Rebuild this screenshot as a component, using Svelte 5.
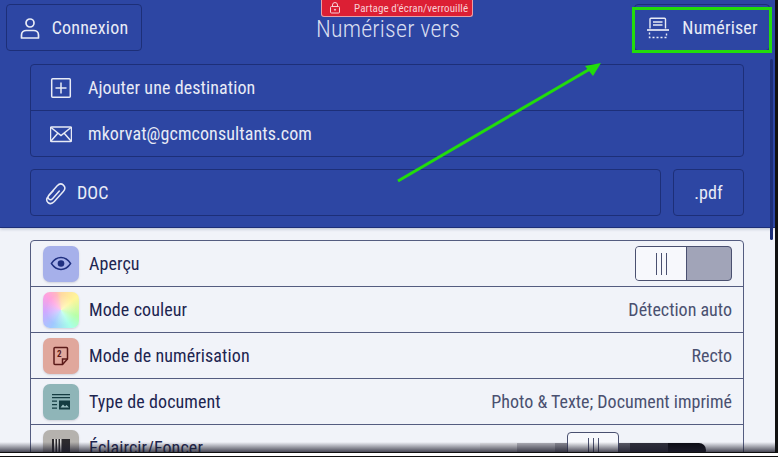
<script>
  const rows = [
    { label: 'Mode couleur', value: 'Détection auto', icon: 'color' },
    { label: 'Mode de numérisation', value: 'Recto', icon: 'sides' },
    { label: 'Type de document', value: 'Photo & Texte; Document imprimé', icon: 'doc' }
  ];
</script>

<div class="screen">
  <div class="app">
    <header class="top">
      <div class="bar">
        <button class="btn login">
          <svg width="20" height="22" viewBox="0 0 20 22" fill="none" stroke="currentColor" stroke-width="1.700">
            <circle cx="10" cy="6" r="4" />
            <path d="M1.500 21v-3c0-2.800 2.200-4.500 4.800-4.500h7.400c2.600 0 4.800 1.700 4.800 4.500v3z" stroke-linejoin="round" />
          </svg>
          <span>Connexion</span>
        </button>
        <h1>Numériser vers</h1>
        <button class="btn scan">
          <svg width="24" height="24" viewBox="0 0 24 24" fill="none" stroke="currentColor" stroke-width="1.400">
            <path d="M4 12.500V3.200c0-.6.400-1 1-1h13.500c.6 0 1 .4 1 1v9.300" />
            <path d="M7 6h9.500M7 9h9.500" />
            <path d="M1 14h22" stroke-width="1.700" />
            <path d="M3.500 16.500v5h17v-5" stroke-dasharray="2 2" />
          </svg>
          <span>Numériser</span>
        </button>
      </div>

      <div class="dest">
        <div class="dest-row">
          <svg width="22" height="22" viewBox="0 0 22 22" fill="none" stroke="currentColor" stroke-width="1.500">
            <rect x="1.700" y="1.700" width="18.600" height="18.600" rx="1" />
            <path d="M11 5.500v11M5.500 11h11" />
          </svg>
          <span>Ajouter une destination</span>
        </div>
        <div class="dest-row">
          <svg width="22" height="22" viewBox="0 0 22 22" fill="none" stroke="currentColor" stroke-width="1.500">
            <rect x="0.500" y="4" width="21" height="14.500" rx="1" />
            <path d="M1 4.500l10 8 10-8M1 18l7-8M21 18l-7-8" />
          </svg>
          <span>mkorvat@gcmconsultants.com</span>
        </div>
      </div>

      <div class="file">
        <div class="name">
          <svg width="22" height="24" viewBox="0 0 22 24" fill="none" stroke="currentColor" stroke-width="1.500" stroke-linecap="round">
            <path d="M8.500 9.500l-5 5.500c-2.300 2.600-2.200 5-.4 6.600 1.800 1.600 4 1.300 6.200-1l9-10c1.900-2.200 1.900-4.800.1-6.500-1.800-1.600-4.300-1.400-6.200.6l-8.200 9.300c-1.200 1.500-1.200 3-.1 4 1.100 1 2.500.8 3.800-.6l6.600-7.400" />
          </svg>
          <span>DOC</span>
        </div>
        <div class="ext">.pdf</div>
      </div>
    </header>

    <main class="settings">
      <div class="list">
        <div class="row">
          <div class="ico" style="background:#a6b0ea">
            <svg width="22" height="15" viewBox="0 0 24 16" fill="none" stroke="#1f2f80" stroke-width="1.500">
              <path d="M1.500 8C4.500 3.500 8 1.500 12 1.500S19.500 3.500 22.500 8c-3 4.500-6.500 6.500-10.500 6.500S4.500 12.500 1.500 8z" />
              <circle cx="12" cy="8" r="3.600" fill="#1f2f80" stroke="none" />
            </svg>
          </div>
          <span class="label">Aperçu</span>
          <div class="toggle">
            <div class="knob"><i></i><i></i><i></i></div>
          </div>
        </div>

        {#each rows as r}
          <div class="row">
            {#if r.icon === 'color'}
              <div class="ico wheel"></div>
            {:else if r.icon === 'sides'}
              <div class="ico" style="background:#e0a79c">
                <svg width="18" height="20" viewBox="0 0 18 20" fill="none" stroke="#5b1a18" stroke-width="1.500">
                  <path d="M2 2.500c0-.6.400-1 1-1h11.500c.6 0 1 .4 1 1V13l-5 5.500H3c-.6 0-1-.4-1-1z" />
                  <path d="M15.500 13h-5v5.500" />
                  <text x="5" y="10.500" font-size="9" font-weight="700" fill="#5b1a18" stroke="none" font-family="Roboto">2</text>
                </svg>
              </div>
            {:else}
              <div class="ico" style="background:#8fb5b8">
                <svg width="20" height="18" viewBox="0 0 20 18" fill="#143c42">
                  <path d="M1 1h18v1.300H1zM1 4h18v1.300H1zM1 7.500h5v1.300H1zM1 11h5v1.300H1zM1 14.500h5v1.300H1z" />
                  <rect x="8" y="7.500" width="11" height="9" />
                  <path d="M9.500 14.500l2.500-3 2 2 1.500-1.500 2.500 2.500z" fill="#9cc0c3" />
                </svg>
              </div>
            {/if}
            <span class="label">{r.label}</span>
            <span class="value">{r.value}</span>
          </div>
        {/each}

        <div class="row">
          <div class="ico" style="background:#b5b2ae">
            <svg width="18" height="18" viewBox="0 0 18 18">
              <rect x="0" y="0" width="18" height="18" fill="#2c2a2e" />
              <path d="M2 0h1.500v18H2zM5 0h1.500v18H5zM8 0h1.500v18H8z" fill="#d8d6d4" />
            </svg>
          </div>
          <span class="label">Éclaircir/Foncer</span>
          <div class="slider">
            <div class="track"></div>
            <div class="knob thumb"><i></i><i></i><i></i></div>
          </div>
        </div>
      </div>
    </main>

    <div class="scroll"></div>
    <div class="fade"></div>

    <div class="banner">
      <svg width="12" height="12" viewBox="0 0 12 12" fill="none" stroke="currentColor" stroke-width="1">
        <rect x="1.500" y="4.500" width="9" height="6.500" rx="1" />
        <path d="M3.500 4.500V3a2.500 2.500 0 015 0v1.500" />
        <circle cx="6" cy="7.700" r=".6" fill="currentColor" />
      </svg>
      <span>Partage d'écran/verrouillé</span>
    </div>

    <div class="highlight"></div>
    <svg class="arrow" width="783" height="461" viewBox="0 0 783 461">
      <line x1="398" y1="181" x2="590" y2="69" stroke="#22dc0c" stroke-width="3" />
      <polygon points="601,63 585,66 593,76" fill="#22dc0c" />
    </svg>
  </div>
  <div class="edge-b"></div>
</div>

<style>
  :global(body) { margin: 0; background: #fff; }
  .screen {
    width: 783px;
    height: 461px;
    overflow: hidden;
    font-family: Roboto, "Liberation Sans", sans-serif;
    font-stretch: 75%;
    letter-spacing: .1px;
    background: #fff;
  }
  .app {
    position: relative;
    width: 775px;
    height: 452px;
    overflow: hidden;
    background: #f1f3f9;
    border-right: 3px solid #111;
    border-bottom: 1px solid #111;
  }
  .edge-b { height: 1px; margin-top: 3px; width: 778px; background: #111; }

  .top {
    background: #2d46a3;
    color: #e8ebf6;
    height: 228px;
    padding: 4px 5px 0 6px;
    box-sizing: border-box;
    border-bottom: 1px solid #1d2f78;
    box-shadow: 0 1px 3px rgba(20, 30, 80, .25);
  }
  .bar {
    display: flex;
    align-items: center;
    justify-content: space-between;
    height: 47px;
  }
  .btn {
    display: flex;
    align-items: center;
    justify-content: center;
    gap: 12px;
    width: 136px;
    height: 47px;
    box-sizing: border-box;
    background: transparent;
    color: inherit;
    border: 1px solid #1d2f78;
    border-radius: 4px;
    font: inherit;
    font-size: 18px;
    letter-spacing: .2px;
    padding: 0;
  }
  h1 {
    margin: 2px 0 0;
    font-weight: 300;
    font-size: 24px;
    letter-spacing: .2px;
    color: #d8ddf0;
  }
  .dest {
    margin: 13px 26px 0 24px;
    border: 1px solid #1d2f78;
    border-radius: 4px;
  }
  .dest-row {
    display: flex;
    align-items: center;
    gap: 16px;
    height: 45px;
    padding-left: 19px;
    font-size: 18px;
  }
  .dest-row + .dest-row { border-top: 1px solid #1d2f78; }
  .file {
    display: flex;
    gap: 12px;
    margin: 12px 26px 0 24px;
    height: 47px;
    font-size: 18px;
  }
  .name, .ext {
    display: flex;
    align-items: center;
    box-sizing: border-box;
    border: 1px solid #1d2f78;
    border-radius: 4px;
  }
  .name { flex: 1; gap: 10px; padding-left: 14px; }
  .ext { width: 71px; justify-content: center; }

  .settings { padding: 12px 31px 0 30px; }
  .list {
    border: 1px solid #545c80;
    border-radius: 4px 4px 0 0;
    color: #1d2550;
  }
  .row {
    display: flex;
    align-items: center;
    height: 45px;
    padding: 0 11px 0 12px;
    font-size: 18px;
  }
  .row + .row { border-top: 1px solid #545c80; }
  .ico {
    flex: none;
    display: flex;
    align-items: center;
    justify-content: center;
    width: 36px;
    height: 36px;
    border-radius: 7px;
    margin-right: 10px;
    box-shadow: 0 1px 2px rgba(60, 60, 90, .18);
  }
  .wheel {
    background:
      radial-gradient(circle, rgba(255, 255, 255, .45), rgba(255, 255, 255, 0) 60%),
      conic-gradient(#ffd8a0, #fff59a 50deg, #b8ffa8 110deg, #a8ffe8 150deg, #a0c8ff 210deg, #d0a8ff 265deg, #ffa0e0 315deg, #ffb8c0 345deg, #ffd8a0);
  }
  .label { flex: 1; }
  .value { color: #4a5070; letter-spacing: 0; }
  .toggle {
    display: flex;
    width: 97px;
    height: 35px;
    box-sizing: border-box;
    background: #a1a4b8;
    border: 1px solid #4a5070;
    border-radius: 4px;
    overflow: hidden;
  }
  .knob {
    display: flex;
    align-items: center;
    justify-content: center;
    gap: 4px;
    width: 50px;
    background: #f7f8fc;
    border-right: 1px solid #4a5070;
  }
  .knob i { width: 1px; height: 22px; background: #4a5070; }
  .slider { position: relative; width: 226px; height: 36px; margin-right: 26px; }
  .track {
    position: absolute;
    left: 0;
    right: 0;
    top: 13px;
    height: 14px;
    border-radius: 0 7px 7px 0;
    background: linear-gradient(90deg,
      #e6e6ea 0 37px, #b4b4bc 37px 75px, #8c8c96 75px 112px,
      #5c5c68 112px 150px, #30303c 150px 188px, #0c0c14 188px);
  }
  .thumb {
    position: absolute;
    left: 87px;
    top: 2px;
    width: 52px;
    height: 34px;
    box-sizing: border-box;
    border: 1px solid #4a5070;
    border-radius: 4px;
  }
  .scroll {
    position: absolute;
    left: 770px;
    top: 59px;
    width: 3px;
    height: 181px;
    background: #1d2f78;
    border-radius: 2px;
  }
  .fade {
    position: absolute;
    left: 0;
    right: 0;
    bottom: 0;
    height: 10px;
    background: linear-gradient(rgba(30, 30, 45, 0), rgba(30, 30, 45, .8));
  }
  .banner {
    position: absolute;
    left: 321px;
    top: 0;
    width: 152px;
    height: 17px;
    display: flex;
    align-items: center;
    gap: 13px;
    padding-left: 7px;
    box-sizing: border-box;
    background: #dc1f34;
    color: #f8d0d4;
    border: 1px solid #e8a0a8;
    border-top: 0;
    border-radius: 0 0 3px 3px;
    font-size: 11px;
  }
  .highlight {
    position: absolute;
    left: 632px;
    top: 7px;
    width: 140px;
    height: 46px;
    box-sizing: border-box;
    border: 3px solid #22dc0c;
  }
  .arrow { position: absolute; left: 0; top: 0; pointer-events: none; }
</style>
